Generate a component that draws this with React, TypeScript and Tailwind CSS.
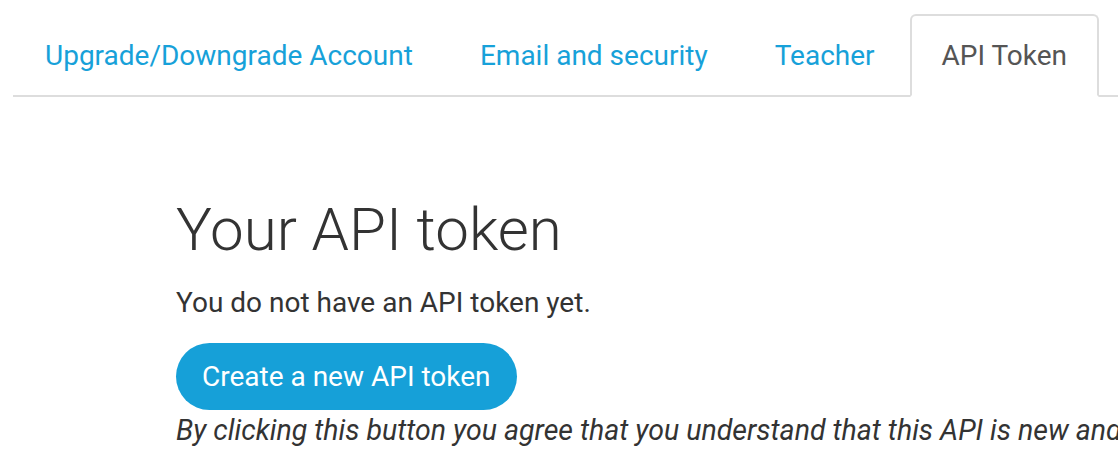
const tabs = [
  { label: "Upgrade/Downgrade Account", active: false },
  { label: "Email and security", active: false },
  { label: "Teacher", active: false },
  { label: "API Token", active: true },
];

export default function App() {
  return (
    <div className="min-h-screen bg-white pt-[14px] pl-[13px] font-['Roboto',sans-serif] overflow-hidden">
      <ul className="flex border-b-2 border-[#dddddd]">
        {tabs.map((t) => (
          <li key={t.label} className="mr-[3px] -mb-[2px]">
            <a
              href="#"
              className={
                t.active
                  ? "block whitespace-nowrap rounded-t-[6px] border-2 border-[#dddddd] border-b-white bg-white px-[30px] py-[19px] text-[28px] leading-[41px] text-[#555555]"
                  : "block whitespace-nowrap rounded-t-[6px] border-2 border-transparent px-[30px] py-[19px] text-[28px] leading-[41px] text-[#17a1d9]"
              }
            >
              {t.label}
            </a>
          </li>
        ))}
      </ul>

      <div className="flex flex-col items-start pl-[163px] pt-[100px]">
        <h1 className="text-[60px] font-light leading-[66px] text-[#333333]">
          Your API token
        </h1>
        <p className="mt-[20px] text-[28px] leading-[40px] text-[#333333]">
          You do not have an API token yet.
        </p>
        <button className="mt-[20px] rounded-full bg-[#16a0d8] px-[26px] py-[13px] text-[28px] leading-[41px] text-white">
          Create a new API token
        </button>
        <p className="mt-[1px] w-[960px] text-[28.5px] italic leading-[40px] text-[#333333]">
          By clicking this button you agree that you understand that this API is new and
          subject to change.
        </p>
      </div>
    </div>
  );
}
